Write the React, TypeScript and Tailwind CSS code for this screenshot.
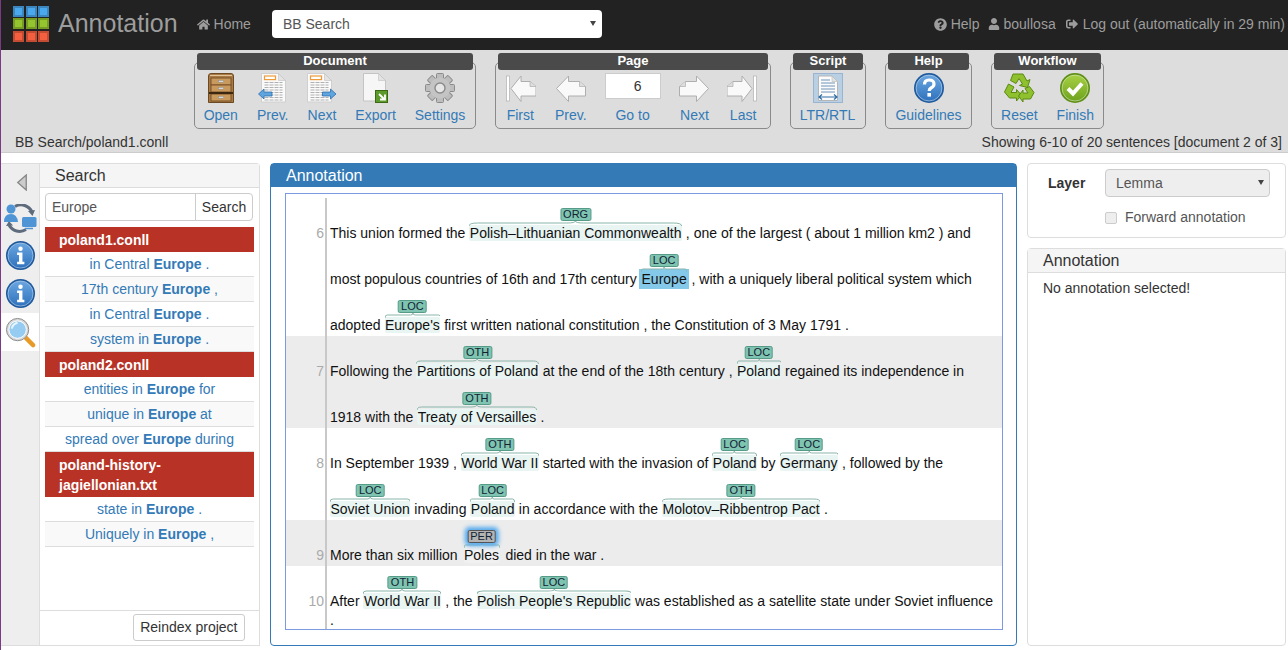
import type { ReactNode } from 'react';
import { FaHome, FaQuestionCircle, FaSignOutAlt, FaUser } from 'react-icons/fa';

const font = "font-['Liberation_Sans',Arial,sans-serif]";

function Logo() {
    const colors = ['#4aa8ee', '#4aa8ee', '#4aa8ee', '#94c42e', '#94c42e', '#94c42e', '#f4603f', '#f4603f', '#f4603f'];
    return (
        <div className="-mt-[1px] ml-[12px] grid w-[36px] grid-cols-3 gap-[1.5px]">
            {colors.map((c, i) => (
                <div key={i} className="h-[11px] w-[11px] border-2 border-black/20" style={{ backgroundColor: c }} />
            ))}
        </div>
    );
}

function Caret() {
    return (
        <svg className="pointer-events-none absolute right-[6px] top-1/2 -mt-[3px]" width="6" height="5" viewBox="0 0 6 5">
            <path d="M0 0H6L3 5Z" fill="#444" />
        </svg>
    );
}

function Cabinet() {
    return (
        <svg width="32" height="32" viewBox="0 0 32 32">
            <path d="M3.5 4Q3.5 1.5 6 1.5H26Q28.5 1.5 28.5 4V30.5H3.5Z" fill="#a97a45" stroke="#6e4a22" />
            <path d="M5 3.5H27" stroke="#e2c49a" />
            {[6, 13, 22].map((y) => (
                <g key={y}>
                    <rect x="6" y={y} width="20" height="7" fill="#c99a5e" stroke="#7a5228" />
                    <rect x="13.5" y={y + 2.5} width="5" height="1.6" fill="#dfe3e6" stroke="#7d8488" strokeWidth=".4" />
                </g>
            ))}
            <rect x="4" y="20" width="24" height="2" fill="#3a2810" />
        </svg>
    );
}

function DocLines() {
    return (
        <>
            <path d="M.5 1.5H17.5L24.5 8.5V30H.5Z" fill="#fafafa" stroke="#cfcfcf" />
            <path d="M17.5 1.5V8.5H24.5Z" fill="#e3e3e3" stroke="#c0c0c0" strokeWidth=".6" />
            <rect x="3.5" y="4" width="11" height="3.6" fill="#fff" stroke="#ef9a3a" strokeWidth="1.2" />
            {[10.5, 13, 15.5, 18, 20.5, 23, 25.5, 28].map((y) => (
                <path key={y} d={`M3.5 ${y}H21.5`} stroke="#a8a8a8" strokeWidth=".9" strokeDasharray="4 1" />
            ))}
        </>
    );
}

function DocPrev() {
    return (
        <svg width="32" height="32" viewBox="0 0 32 32">
            <g transform="translate(4 0)">
                <DocLines />
            </g>
            <path d="M1.5 22L7 17V20H15V24H7V27Z" fill="#5ea4de" stroke="#2f6ea8" strokeWidth=".8" />
        </svg>
    );
}

function DocNext() {
    return (
        <svg width="32" height="32" viewBox="0 0 32 32">
            <g transform="translate(1 0)">
                <DocLines />
            </g>
            <path d="M30 22L24.5 17V20H16.5V24H24.5V27Z" fill="#5ea4de" stroke="#2f6ea8" strokeWidth=".8" />
        </svg>
    );
}

function DocExport() {
    return (
        <svg width="32" height="32" viewBox="0 0 32 32">
            <path d="M3.5 1.5H18.5L25.5 8.5V29H3.5Z" fill="#f6f6f6" stroke="#c4c4c4" />
            <path d="M18.5 1.5V8.5H25.5Z" fill="#e3e3e3" stroke="#c0c0c0" strokeWidth=".6" />
            <rect x="15.5" y="18.5" width="12" height="12" fill="#5c9a2a" stroke="#3b6a14" />
            <path d="M19 22L24.5 27.5M25 22.5V27.5H20" fill="none" stroke="#fff" strokeWidth="1.8" />
        </svg>
    );
}

function Gear() {
    const teeth = [0, 45, 90, 135, 180, 225, 270, 315];
    return (
        <svg width="32" height="32" viewBox="0 0 32 32">
            {teeth.map((a) => (
                <rect key={a} x="12.5" y="1.5" width="7" height="7" rx="1" fill="#bdbdbd" stroke="#8a8a8a" transform={`rotate(${a} 16 16)`} />
            ))}
            <circle cx="16" cy="16" r="10.5" fill="#c4c4c4" />
            <circle cx="16" cy="16" r="5" fill="#e6e6e6" stroke="#8a8a8a" strokeWidth="1.4" />
        </svg>
    );
}

function ArrowPage({ dir, bar }: { dir: 'left' | 'right'; bar?: boolean }) {
    const head = bar ? 'M7 16.5L17 4V9.5H26L32 14.5V24H17V29.5Z' : 'M1.5 16.5L13.5 4V9.5H24.5L30.5 14.5V24H13.5V29.5Z';
    const fold = bar ? 'M26 9.5V14.5H32' : 'M24.5 9.5V14.5H30.5';
    return (
        <svg width="32" height="32" viewBox="0 0 32 32" className={dir === 'right' ? '-scale-x-100' : ''}>
            {bar && <rect x="2.5" y="4" width="3" height="25" fill="#fff" stroke="#b0b0b0" strokeWidth=".7" />}
            <path d={head} fill="#f9f9f9" stroke="#aeaeae" />
            <path d={fold} fill="#ddd" stroke="#aeaeae" strokeWidth=".7" />
        </svg>
    );
}

function ScriptIcon() {
    return (
        <svg width="32" height="32" viewBox="0 0 32 32">
            <rect x="1.5" y="1.5" width="29" height="29" fill="#b9cfe4" stroke="#98b4d0" />
            <path d="M6.5 4H20L25.5 9.5V28.5H6.5Z" fill="#fbfbfb" stroke="#b5b5b5" />
            <path d="M20 4V9.5H25.5Z" fill="#e3e3e3" stroke="#bbb" strokeWidth=".6" />
            {[8, 11, 14, 17, 20].map((y) => (
                <path key={y} d={`M9 ${y}H${y < 10 ? 18 : 23}`} stroke="#6f93b8" />
            ))}
            <path d="M7 25H25M10 22.5L7 25L10 27.5M22 22.5L25 25L22 27.5" fill="none" stroke="#2f6ea8" strokeWidth="1.2" />
        </svg>
    );
}

function Circle({ id, light, dark, rim }: { id: string; light: string; dark: string; rim: string }) {
    return (
        <>
            <defs>
                <linearGradient id={id} x1="0" y1="0" x2="0" y2="1">
                    <stop offset="0" stopColor={light} />
                    <stop offset="1" stopColor={dark} />
                </linearGradient>
            </defs>
            <circle cx="16" cy="16" r="15" fill={rim} />
            <circle cx="16" cy="16" r="13" fill={`url(#${id})`} stroke="#ffffff" strokeOpacity=".45" />
        </>
    );
}

function QuestionIcon() {
    return (
        <svg width="32" height="32" viewBox="0 0 32 32">
            <Circle id="q" light="#6aa6e0" dark="#2f72bd" rim="#1f5a9e" />
            <path d="M11.5 12.5Q11.5 8 16 8Q21 8 21 12Q21 14.5 18 16Q16.2 17 16.2 19" fill="none" stroke="#fff" strokeWidth="3.2" />
            <rect x="14.4" y="21" width="3.6" height="3.6" fill="#fff" />
        </svg>
    );
}

function RecycleIcon() {
    return (
        <svg width="32" height="32" viewBox="0 0 32 32">
            <g fill="#8fc02e" stroke="#5b8a12" strokeWidth="1">
                <path d="M10 2H20L24 9L27 7.5L24.5 15.5L16.5 13.5L19.5 12L16 6.5L13 11.5L7.5 8.5Z" />
                <path d="M5.5 12L11 15L8 20.5H13.5V17.5L18.5 23L13.5 29V26H6.5L1.5 20Z" />
                <path d="M26.5 14.5L31 20.5L27.5 27H20V30L15.5 24L20 18V21H25L22 16.5Z" />
            </g>
        </svg>
    );
}

function CheckIcon() {
    return (
        <svg width="32" height="32" viewBox="0 0 32 32">
            <Circle id="c" light="#a6d043" dark="#6fa31e" rim="#5f8f14" />
            <path d="M9 16.5L14 21.5L23 11.5" fill="none" stroke="#fff" strokeWidth="4" />
        </svg>
    );
}

function InfoIcon({ id }: { id: string }) {
    return (
        <svg width="31" height="31" viewBox="0 0 32 32">
            <Circle id={id} light="#6aa6e0" dark="#2f72bd" rim="#1f5a9e" />
            <circle cx="16" cy="9" r="2.3" fill="#fff" />
            <path d="M12.5 13H18V22.5H20V25H12.5V22.5H14.5V15.5H12.5Z" fill="#fff" />
        </svg>
    );
}

function SyncUsers() {
    return (
        <svg width="33" height="29" viewBox="0 0 33 29">
            <path d="M11 2.5A12 12 0 0 1 28 8M22 25.5A12 12 0 0 1 5 21" fill="none" stroke="#5d6b7d" strokeWidth="3" />
            <path d="M31 6L28.5 12L24 7Z" fill="#5d6b7d" />
            <path d="M2 22L5 17L9 21.5Z" fill="#5d6b7d" />
            <circle cx="7" cy="5" r="4.5" fill="#4f94d4" />
            <path d="M0 18Q0 10 7 10Q13 10 14 18Z" fill="#4f94d4" />
            <rect x="18" y="13" width="14.5" height="10" rx="1.5" fill="#4f94d4" />
            <path d="M21 24.5H29" stroke="#4f94d4" strokeWidth="1.5" />
        </svg>
    );
}

function Magnifier() {
    return (
        <svg width="31" height="31" viewBox="0 0 32 32">
            <path d="M20 20L29 29" stroke="#e89a28" strokeWidth="4.5" strokeLinecap="round" />
            <circle cx="13" cy="13" r="11.5" fill="#d8d8d8" stroke="#8a8a8a" />
            <circle cx="13" cy="13" r="9" fill="#96ccf2" stroke="#fff" />
            <path d="M7 12Q8 7 13 6" fill="none" stroke="#e6f4fd" strokeWidth="2" />
        </svg>
    );
}

function ToolItem({ icon, label, wide }: { icon: ReactNode; label: string; wide?: boolean }) {
    return (
        <div className={`flex flex-col items-center ${wide ? 'px-[10.5px]' : 'px-[9.5px]'}`}>
            <div className="flex h-[32px] w-0 justify-center [&>svg]:shrink-0">{icon}</div>
            <div className="mt-[1px] whitespace-nowrap text-[14px] leading-[20px] text-[#337ab7]">{label}</div>
        </div>
    );
}

function ToolGroup({ title, width, className, inner, children }: { title: string; width: string; className?: string; inner?: string; children: ReactNode }) {
    return (
        <div className={`${width} ${className ?? ''}`}>
            <div className="relative z-10 mx-[3px] -mb-[8px] h-[17px] rounded-[3px] bg-[#4a4a4a] text-center text-[13px] font-bold leading-[16px] text-white">
                {title}
            </div>
            <div className={`flex h-[67px] justify-center rounded-[5px] border-[1.5px] border-[#8a8a8a] pt-[9px] ${inner ?? 'pr-[1px]'}`}>{children}</div>
        </div>
    );
}

function Ann({ label, selected, children }: { label: string; selected?: 'blue' | 'per'; children: ReactNode }) {
    const bg =
        selected === 'blue'
            ? 'mx-[.5px] bg-[#85c9ea] shadow-[0_0_0_2px_#85c9ea]'
            : selected === 'per'
              ? 'mx-[2px] rounded-[2px] bg-[#f0f0f0]'
              : 'rounded-[2px] bg-[#e8f5f2]';
    const tag =
        selected === 'per'
            ? 'bg-[#b4b4b4] border-[#555] shadow-[0_0_4px_3px_#55aaee]'
            : 'bg-[#7fc4b0] border-[#569a88]';
    return (
        <span className={`relative inline-block whitespace-nowrap px-[.5px] ${bg}`}>
            <svg className="absolute left-0 top-[-4px] h-[5px] w-full" viewBox="0 0 100 5" preserveAspectRatio="none">
                <path
                    d="M0 5Q0 2 4 2L46 2Q50 2 50 0Q50 2 54 2L96 2Q100 2 100 5"
                    fill="none"
                    stroke="#8ab5aa"
                    strokeWidth="1"
                    vectorEffect="non-scaling-stroke"
                />
            </svg>
            <span
                className={`absolute left-1/2 top-[-17px] h-[13px] -translate-x-1/2 rounded-[2px] border px-[2px] text-[11px] leading-[11px] text-[#123] ${tag}`}
            >
                {label}
            </span>
            {children}
        </span>
    );
}

function Line({ short, children }: { short?: boolean; children: ReactNode }) {
    return <div className={`whitespace-pre text-[14px] leading-[16px] text-[#111] ${short ? 'h-[17px]' : 'h-[46px] pt-[27px]'}`}>{children}</div>;
}

function Sentence({ n, shaded, top, children }: { n: number; shaded?: boolean; top?: boolean; children: ReactNode }) {
    return (
        <div className={`flex ${shaded ? 'bg-[#ececec]' : 'bg-white'} ${top ? 'pt-[4px]' : ''}`}>
            <div className="w-[41px] shrink-0 border-r-2 border-[#c8c8c8] pr-[1px] pt-[27px] text-right text-[14px] leading-[16px] text-[#aaa]">{n}</div>
            <div className="pl-[3px]">{children}</div>
        </div>
    );
}

function ResultHead({ children }: { children: ReactNode }) {
    return <div className="bg-[#b83326] px-[14px] py-[2.5px] text-[14px] font-bold leading-[20px] text-white">{children}</div>;
}

function Result({ before, after, odd }: { before: string; after: string; odd?: boolean }) {
    return (
        <div className={`border-b border-[#ddd] py-[2px] text-center text-[14px] leading-[20px] text-[#337ab7] ${odd ? 'bg-[#f9f9f9]' : 'bg-white'}`}>
            {before} <b>Europe</b> {after}
        </div>
    );
}

export default function App() {
    return (
        <div className={`${font} h-[650px] w-[1288px] overflow-hidden border-l border-[#7a3a85] bg-white text-[14px] text-[#333]`}>
            <header className="flex h-[50px] items-center bg-[#222] pb-[2px]">
                <Logo />
                <span className="ml-[9px] text-[25px] text-[#9d9d9d]">Annotation</span>
                <span className="ml-[19px] flex items-center gap-[4px] text-[#9d9d9d]">
                    <FaHome className="text-[13px]" /> Home
                </span>
                <div className="relative ml-[21px] h-[28px] w-[330px]">
                    <select defaultValue="BB Search" className="h-full w-full appearance-none rounded-[4px] bg-white pl-[11px] text-[14px] text-[#555]">
                        <option>BB Search</option>
                    </select>
                    <Caret />
                </div>
                <div className="ml-auto flex items-center pr-[3px] text-[#9d9d9d]">
                    <FaQuestionCircle className="mr-[4px] text-[13px]" /> Help
                    <FaUser className="ml-[8px] mr-[4px] text-[12px]" /> boullosa
                    <FaSignOutAlt className="ml-[10px] mr-[5px] text-[12px]" /> Log out (automatically in 29 min)
                </div>
            </header>

            <div className="h-[103px] border-b border-[#ccc] bg-[#ddd]">
                <div className="flex pl-[193px] pt-[3px]">
                    <ToolGroup title="Document" width="w-[282px]">
                        <ToolItem icon={<Cabinet />} label="Open" />
                        <ToolItem icon={<DocPrev />} label="Prev." />
                        <ToolItem icon={<DocNext />} label="Next" />
                        <ToolItem icon={<DocExport />} label="Export" />
                        <ToolItem icon={<Gear />} label="Settings" />
                    </ToolGroup>
                    <ToolGroup title="Page" width="w-[276px]" className="ml-[19px]" inner="pr-[3px]">
                        <ToolItem wide icon={<ArrowPage dir="left" bar />} label="First" />
                        <ToolItem wide icon={<ArrowPage dir="left" />} label="Prev." />
                        <div className="ml-[7.5px] mr-[9px] flex w-[56px] flex-col items-center pt-[1px]">
                            <input
                                readOnly
                                defaultValue="6"
                                className="h-[26px] w-[56px] border border-[#ccc] bg-white pr-[18px] text-right text-[14px] text-[#333]"
                            />
                            <div className="mt-[6px] text-[14px] leading-[20px] text-[#337ab7]">Go to</div>
                        </div>
                        <ToolItem wide icon={<ArrowPage dir="right" />} label="Next" />
                        <ToolItem wide icon={<ArrowPage dir="right" bar />} label="Last" />
                    </ToolGroup>
                    <ToolGroup title="Script" width="w-[76px]" className="ml-[19px]">
                        <ToolItem icon={<ScriptIcon />} label="LTR/RTL" />
                    </ToolGroup>
                    <ToolGroup title="Help" width="w-[87px]" className="ml-[19px]" inner="pr-0">
                        <ToolItem icon={<QuestionIcon />} label="Guidelines" />
                    </ToolGroup>
                    <ToolGroup title="Workflow" width="w-[113px]" className="ml-[19px]" inner="pr-0">
                        <ToolItem icon={<RecycleIcon />} label="Reset" />
                        <ToolItem icon={<CheckIcon />} label="Finish" />
                    </ToolGroup>
                </div>
                <div className="flex justify-between pl-[14px] pr-[6px] pt-[3px] leading-[20px]">
                    <span>BB Search/poland1.conll</span>
                    <span>Showing 6-10 of 20 sentences [document 2 of 3]</span>
                </div>
            </div>

            <main className="flex pt-[10px]">
                <aside className="flex h-[483px] w-[259px] rounded-tr-[4px] border border-l-0 border-[#ddd]">
                    <div className="w-[39px] shrink-0 border-r border-[#ddd] bg-[#eee]">
                        <div className="flex h-[36px] items-center justify-center pl-[3px]">
                            <svg width="12" height="17" viewBox="0 0 12 18">
                                <path d="M10.5 1L1.5 9L10.5 17Z" fill="#ccc" stroke="#888" strokeWidth="1.4" />
                            </svg>
                        </div>
                        <div className="flex h-[37px] items-center justify-center">
                            <SyncUsers />
                        </div>
                        <div className="flex h-[37px] items-center justify-center">
                            <InfoIcon id="i1" />
                        </div>
                        <div className="flex h-[38px] items-center justify-center">
                            <InfoIcon id="i2" />
                        </div>
                        <div className="mt-[1px] flex h-[38px] items-center justify-center bg-white">
                            <Magnifier />
                        </div>
                    </div>
                    <div className="flex min-w-0 flex-1 flex-col">
                        <div className="h-[24px] border-b border-[#ddd] bg-[#f5f5f5] pl-[15px] text-[16px] leading-[24px]">Search</div>
                        <div className="flex-1 px-[5px] pt-[5px]">
                            <div className="flex h-[28px] w-[208px] rounded-[4px] border border-[#ccc] text-[14px] leading-[26px]">
                                <div className="w-[150px] border-r border-[#ccc] pl-[6px] text-[#555]">Europe</div>
                                <div className="flex-1 text-center">Search</div>
                            </div>
                            <div className="mt-[6px] w-[209px]">
                                <ResultHead>poland1.conll</ResultHead>
                                <Result before="in Central" after="." />
                                <Result before="17th century" after="," odd />
                                <Result before="in Central" after="." />
                                <Result before="system in" after="." odd />
                                <ResultHead>poland2.conll</ResultHead>
                                <Result before="entities in" after="for" />
                                <Result before="unique in" after="at" odd />
                                <Result before="spread over" after="during" />
                                <ResultHead>poland-history-jagiellonian.txt</ResultHead>
                                <Result before="state in" after="." />
                                <Result before="Uniquely in" after="," odd />
                            </div>
                        </div>
                        <div className="flex h-[35px] justify-end border-t border-[#ddd] pr-[14px] pt-[3px]">
                            <div className="h-[27px] rounded-[3px] border border-[#ccc] px-[6.5px] leading-[25px]">Reindex project</div>
                        </div>
                    </div>
                </aside>

                <section className="ml-[10px] h-[483px] w-[747px] rounded-[4px] border border-[#337ab7]">
                    <div className="h-[23px] bg-[#337ab7] pl-[15px] text-[16px] leading-[24px] text-white">Annotation</div>
                    <div className="mx-[14px] mt-[6px] h-[437px] w-[718px] border border-[#7c9ae0]">
                        <Sentence n={6} top>
                            <Line>
                                This union formed the <Ann label="ORG">Polish–Lithuanian Commonwealth</Ann> , one of the largest ( about 1 million km2 ) and
                            </Line>
                            <Line>
                                most populous countries of 16th and 17th century <Ann label="LOC" selected="blue">Europe</Ann> , with a uniquely liberal political system which
                            </Line>
                            <Line>
                                adopted <Ann label="LOC">Europe's</Ann> first written national constitution , the Constitution of 3 May 1791 .
                            </Line>
                        </Sentence>
                        <Sentence n={7} shaded>
                            <Line>
                                Following the <Ann label="OTH">Partitions of Poland</Ann> at the end of the 18th century , <Ann label="LOC">Poland</Ann> regained its independence in
                            </Line>
                            <Line>
                                1918 with the <Ann label="OTH">Treaty of Versailles</Ann> .
                            </Line>
                        </Sentence>
                        <Sentence n={8}>
                            <Line>
                                In September 1939 , <Ann label="OTH">World War II</Ann> started with the invasion of <Ann label="LOC">Poland</Ann> by <Ann label="LOC">Germany</Ann> , followed by the
                            </Line>
                            <Line>
                                <Ann label="LOC">Soviet Union</Ann> invading <Ann label="LOC">Poland</Ann> in accordance with the <Ann label="OTH">Molotov–Ribbentrop Pact</Ann> .
                            </Line>
                        </Sentence>
                        <Sentence n={9} shaded>
                            <Line>
                                More than six million <Ann label="PER" selected="per">Poles</Ann> died in the war .
                            </Line>
                        </Sentence>
                        <Sentence n={10}>
                            <Line>
                                After <Ann label="OTH">World War II</Ann> , the <Ann label="LOC">Polish People's Republic</Ann> was established as a satellite state under Soviet influence
                            </Line>
                            <Line short>.</Line>
                        </Sentence>
                    </div>
                </section>

                <aside className="ml-[10px] w-[259px]">
                    <div className="h-[75px] rounded-[4px] border border-[#ddd] pl-[20px] pt-[5px]">
                        <div className="flex items-center">
                            <span className="w-[57px] font-bold">Layer</span>
                            <div className="relative h-[28px] w-[165px]">
                                <select disabled defaultValue="Lemma" className="h-full w-full appearance-none rounded-[4px] border border-[#ccc] bg-[#eee] pl-[10px] text-[14px] text-[#555] opacity-100">
                                    <option>Lemma</option>
                                </select>
                                <Caret />
                            </div>
                        </div>
                        <div className="ml-[57px] mt-[10px] flex items-center text-[#555]">
                            <span className="h-[12px] w-[12px] rounded-[2px] border border-[#ccc] bg-[#eee]" />
                            <span className="ml-[8px]">Forward annotation</span>
                        </div>
                    </div>
                    <div className="mt-[10px] h-[398px] rounded-[4px] border border-[#ddd]">
                        <div className="h-[24px] border-b border-[#ddd] bg-[#f5f5f5] pl-[15px] text-[16px] leading-[24px]">Annotation</div>
                        <div className="pl-[15px] pt-[5px] leading-[20px]">No annotation selected!</div>
                    </div>
                </aside>
            </main>
        </div>
    );
}
